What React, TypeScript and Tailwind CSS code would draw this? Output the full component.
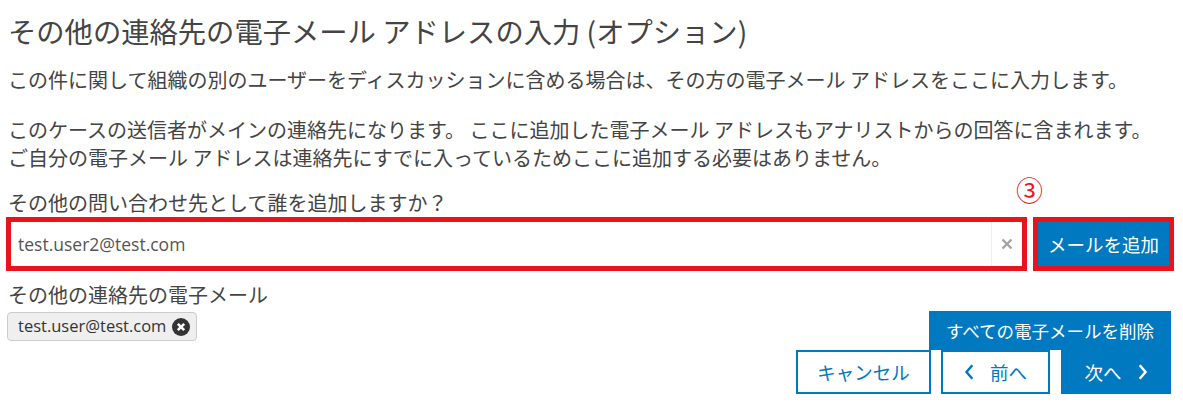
import React, { useState } from 'react';

const ChevronLeft: React.FC<{ className?: string }> = ({ className }) => (
    <svg viewBox="0 0 12 18" className={className} fill="none" stroke="currentColor" strokeWidth={3} strokeLinecap="square">
        <polyline points="9,2 3,9 9,16" />
    </svg>
);

const ChevronRight: React.FC<{ className?: string }> = ({ className }) => (
    <svg viewBox="0 0 12 18" className={className} fill="none" stroke="currentColor" strokeWidth={3} strokeLinecap="square">
        <polyline points="3,2 9,9 3,16" />
    </svg>
);

const App: React.FC = () => {
    const [email, setEmail] = useState('test.user2@test.com');
    const [contacts, setContacts] = useState<string[]>(['test.user@test.com']);

    return (
        <div className="w-[1183px] h-[411px] overflow-hidden bg-white text-[#444] font-['Noto_Sans_CJK_JP',sans-serif]">
            <div className="pl-[8px] pr-[8px] pt-[13px]">
                <h1 className="text-[28.3px] leading-[36px] font-normal whitespace-nowrap">
                    その他の連絡先の電子メール アドレスの入力 (オプション)
                </h1>
                <p className="mt-[17px] text-[20px] leading-[28px] whitespace-nowrap">
                    この件に関して組織の別のユーザーをディスカッションに含める場合は、その方の電子メール アドレスをここに入力します。
                </p>
                <p className="mt-[22px] text-[20px] leading-[28px] whitespace-nowrap">
                    このケースの送信者がメインの連絡先になります。 ここに追加した電子メール アドレスもアナリストからの回答に含まれます。
                    <br />
                    ご自分の電子メール アドレスは連絡先にすでに入っているためここに追加する必要はありません。
                </p>
                <div className="mt-[17px] flex items-center justify-between">
                    <label htmlFor="email" className="text-[20px] leading-[28px]">
                        その他の問い合わせ先として誰を追加しますか？
                    </label>
                    <span className="-mt-[26px] mr-[132px] text-[27px] leading-[28px] text-[#e8141c]">③</span>
                </div>
            </div>

            {/* input row */}
            <div className="flex gap-[6px] pl-[6px] pr-[9px]">
                <div className="flex flex-1 h-[54px] border-[5px] border-[#e8141c] bg-white">
                    <input
                        id="email"
                        type="text"
                        value={email}
                        onChange={(e) => setEmail(e.target.value)}
                        className="flex-1 pl-[7px] text-[17.5px] font-normal text-[#555] outline-none font-['Open_Sans',sans-serif]"
                    />
                    <button
                        onClick={() => setEmail('')}
                        className="w-[31px] flex items-center justify-center border-l border-[#eee] text-[#a3a3a3]"
                    >
                        <svg viewBox="0 0 12 12" className="w-[12px] h-[12px]" stroke="currentColor" strokeWidth={2.4}>
                            <line x1="1.5" y1="1.5" x2="10.5" y2="10.5" />
                            <line x1="10.5" y1="1.5" x2="1.5" y2="10.5" />
                        </svg>
                    </button>
                </div>
                <div className="w-[141px] h-[54px] border-[5px] border-[#e8141c]">
                    <button
                        onClick={() => email && setContacts([...contacts, email])}
                        className="w-full h-full bg-[#0079c1] text-white text-[18.5px] leading-none"
                    >
                        メールを追加
                    </button>
                </div>
            </div>

            <div className="pl-[8px] mt-[10px] text-[20px] leading-[28px]">その他の連絡先の電子メール</div>

            <div className="flex items-start justify-between pl-[7px] pr-[12px] mt-[2px]">
                <div className="flex gap-2 mt-[1px]">
                    {contacts.map((c) => (
                        <span
                            key={c}
                            className="flex items-center h-[29px] pl-[10px] pr-[6px] gap-[6px] bg-[#efefef] border border-[#ccc] rounded-[4px] text-[16.5px] font-normal text-[#333] font-['Open_Sans',sans-serif]"
                        >
                            {c}
                            <svg viewBox="0 0 18 18" className="w-[18px] h-[18px]">
                                <circle cx="9" cy="9" r="9" fill="#333" />
                                <line x1="5.8" y1="5.8" x2="12.2" y2="12.2" stroke="#fff" strokeWidth={2.6} />
                                <line x1="12.2" y1="5.8" x2="5.8" y2="12.2" stroke="#fff" strokeWidth={2.6} />
                            </svg>
                        </span>
                    ))}
                </div>
                <button
                    onClick={() => setContacts([])}
                    className="w-[242px] h-[39px] bg-[#0079c1] text-white text-[17.5px] leading-none"
                >
                    すべての電子メールを削除
                </button>
            </div>

            <div className="flex justify-end gap-[10px] pr-[12px]">
                <button className="w-[135px] h-[44px] border-2 border-[#0079c1] text-[#0079c1] text-[18.5px] leading-none">
                    キャンセル
                </button>
                <button className="w-[109px] h-[44px] border-2 border-[#0079c1] text-[#0079c1] text-[18.5px] leading-none flex items-center justify-center gap-[16px]">
                    <ChevronLeft className="w-[10px] h-[16px]" />
                    <span>前へ</span>
                </button>
                <button className="ml-[1px] w-[110px] h-[44px] bg-[#0079c1] text-white text-[18.5px] leading-none flex items-center justify-center gap-[16px]">
                    <span>次へ</span>
                    <ChevronRight className="w-[10px] h-[16px]" />
                </button>
            </div>
        </div>
    );
};

export default App;
